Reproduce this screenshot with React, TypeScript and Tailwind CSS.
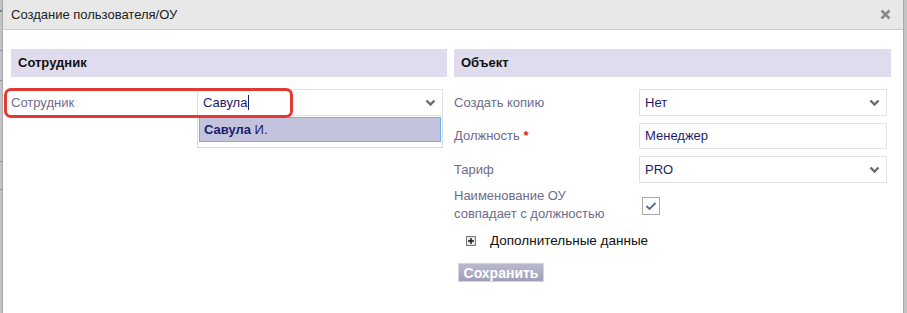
import React from "react";

const Chevron = () => (
  <svg width="11" height="8" viewBox="0 0 11 8" className="shrink-0">
    <path d="M1.5 1.5 L5.5 5.5 L9.5 1.5" fill="none" stroke="#6b6b6b" strokeWidth="2.4" />
  </svg>
);

const labelCls = "text-[13px] text-[#6c6c8c]";
const valueCls = "text-[13px] text-[#1d1d6b]";

export default function App() {
  return (
    <div
      className="w-[907px] h-[313px] flex bg-white overflow-hidden"
      style={{ fontFamily: '"Liberation Sans", Arial, sans-serif' }}
    >
      <div className="w-[3px] bg-[#c4c4c4] flex flex-col border-r border-[#a9a9a9]">
        <div className="h-[10px]" />
        <div className="h-[2px] bg-[#7d7d8f]" />
        <div className="h-[38px]" />
        <div className="h-[1px] bg-[#8a8a8a]" />
        <div className="h-[29px]" />
        <div className="h-[1px] bg-[#8a8a8a]" />
        <div className="h-[80px]" />
        <div className="h-[1px] bg-[#8a8a8a]" />
        <div className="h-[27px]" />
        <div className="h-[1px] bg-[#8a8a8a]" />
      </div>
      <div className="flex-1 flex flex-col relative">
        <div className="h-[30px] bg-[#e8e8e8] border-b border-[#cdcdcd] flex items-center justify-between pl-[8px] pr-[12px] shrink-0">
          <span className="text-[13px] text-[#222]">Создание пользователя/ОУ</span>
          <svg width="11" height="11" viewBox="0 0 11 11">
            <path d="M1.5 1.5 L9.5 9.5 M9.5 1.5 L1.5 9.5" stroke="#8a8a8a" strokeWidth="2.6" />
          </svg>
        </div>
        <div className="flex pl-[8px] pr-[12px] pt-[19px] gap-[7px]">
          {/* Left column */}
          <div className="w-[436px] flex flex-col">
            <div className="h-[28px] bg-[#dedced] flex items-center pl-[7px]">
              <span className="text-[13px] font-bold text-[#111]">Сотрудник</span>
            </div>
            <div className="mt-[12px] flex items-start">
              <div className={`w-[186px] h-[27px] flex items-center ${labelCls}`}>Сотрудник</div>
              <div className="w-[246px] flex flex-col">
                <div className="h-[27px] border border-[#e2e2e2] flex items-center justify-between pl-[5px] pr-[6px]">
                  <span className={`${valueCls} flex items-center`}>
                    Савула<span className="inline-block w-[1px] h-[15px] bg-[#1d1d6b] ml-[1px]" />
                  </span>
                  <Chevron />
                </div>
                <div className="h-[32px] border border-t-0 border-[#d9d9d9] px-[1px] pt-[1px]">
                  <div className="h-[25px] bg-[#c4c3de] border border-[#6ab4ef] flex items-center pl-[4px]">
                    <span className={valueCls}>
                      <b>Савула</b> И.
                    </span>
                  </div>
                </div>
              </div>
            </div>
          </div>
          {/* Right column */}
          <div className="w-[437px] flex flex-col">
            <div className="h-[28px] bg-[#dedced] flex items-center pl-[7px]">
              <span className="text-[13px] font-bold text-[#111]">Объект</span>
            </div>
            <div className="mt-[12px] flex items-center">
              <div className={`w-[185px] ${labelCls}`}>Создать копию</div>
              <div className="w-[248px] h-[27px] border border-[#e2e2e2] flex items-center justify-between pl-[5px] pr-[6px]">
                <span className={valueCls}>Нет</span>
                <Chevron />
              </div>
            </div>
            <div className="mt-[7px] flex items-center">
              <div className={`w-[185px] ${labelCls}`}>
                Должность <span className="text-[#e02020] font-bold">*</span>
              </div>
              <div className="w-[248px] h-[26px] border border-[#e2e2e2] flex items-center pl-[5px]">
                <span className={valueCls}>Менеджер</span>
              </div>
            </div>
            <div className="mt-[7px] flex items-center">
              <div className={`w-[185px] ${labelCls}`}>Тариф</div>
              <div className="w-[248px] h-[27px] border border-[#e2e2e2] flex items-center justify-between pl-[5px] pr-[6px]">
                <span className={valueCls}>PRO</span>
                <Chevron />
              </div>
            </div>
            <div className="mt-[4px] flex items-start">
              <div className={`w-[188px] leading-[18px] ${labelCls}`}>
                Наименование ОУ
                <br />
                совпадает с должностью
              </div>
              <div className="mt-[10px] w-[18px] h-[18px] border border-[#a9a9a9] bg-white flex items-center justify-center">
                <svg width="12" height="10" viewBox="0 0 12 10">
                  <path d="M1.5 5 L4.5 8 L10.5 2" fill="none" stroke="#5a6a92" strokeWidth="1.8" />
                </svg>
              </div>
            </div>
            <div className="mt-[10px] flex items-center pl-[12px] h-[16px]">
              <div className="w-[10px] h-[10px] border border-[#777] bg-[#e8e8e8] flex items-center justify-center">
                <svg width="8" height="8" viewBox="0 0 8 8">
                  <path d="M4 1 V7 M1 4 H7" stroke="#111" strokeWidth="1.4" />
                </svg>
              </div>
              <span className="ml-[14px] text-[13.5px] text-[#111]">Дополнительные данные</span>
            </div>
            <div className="mt-[14px] pl-[4px]">
              <div className="w-[86px] h-[19px] bg-gradient-to-b from-[#b9b8cc] to-[#a09fb9] border border-[#d4d4de] flex items-center justify-center">
                <span className="text-[14px] font-bold text-white leading-none">Сохранить</span>
              </div>
            </div>
          </div>
        </div>
        {/* red highlight overlay */}
        <div className="absolute left-[1px] top-[88px] w-[289px] h-[30px] border-[3px] border-[#e23a33] rounded-[7px] pointer-events-none" />
      </div>
      <div className="w-[4px] bg-[#c4c4c4] border-l border-[#a9a9a9]" />
    </div>
  );
}
